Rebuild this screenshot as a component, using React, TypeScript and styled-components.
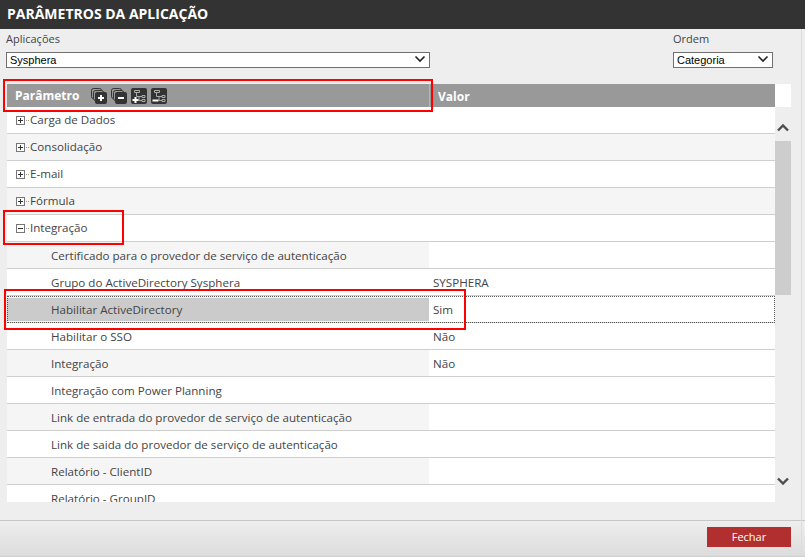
import React from "react";
import styled, { createGlobalStyle } from "styled-components";

const Global = createGlobalStyle`
  html, body { margin: 0; padding: 0; background: #eeeeee; }
  * { box-sizing: border-box; }
`;

const Page = styled.div`
  width: 805px; height: 557px; display: flex; flex-direction: column; position: relative; overflow: hidden;
  background: #eeeeee; font-family: "Open Sans", "Noto Sans", sans-serif; color: #444;
`;
const TitleBar = styled.div`
  height: 29px; background: #333333; color: #fff; font-weight: 700; font-size: 14px; line-height: 27px; padding-left: 7px; flex: none;
`;
const Content = styled.div`flex: 1; min-height: 0; display: flex; flex-direction: column; padding: 0 14px 0 6px;`;
const Filters = styled.div`display: flex; justify-content: space-between; height: 55px; flex: none; padding-right: 18px;`;
const Field = styled.div`display: flex; flex-direction: column; padding-top: 2px;`;
const Label = styled.div`font-size: 11px; line-height: 15px; color: #444; margin-bottom: 6px;`;
const FieldSelect = styled.div<{ $w: number }>`
  width: ${p => p.$w}px; height: 16px; background: #fff; border: 1px solid #707070; position: relative;
  font-family: "Liberation Sans", Arial, sans-serif; font-size: 11px; line-height: 14px; color: #000; padding-left: 3px;
  svg { position: absolute; right: 3px; top: 2px; }
`;
const Grid = styled.div`flex: 1; min-height: 0; display: flex; flex-direction: column; padding-left: 1px;`;
const HeaderRow = styled.div`display: flex; height: 23px; flex: none;`;
const HeaderCells = styled.div`flex: 1; display: flex; background: #999; color: #fff; font-weight: 700; font-size: 12px; line-height: 25px;`;
const HeaderParam = styled.div`width: 423px; display: flex; align-items: center; padding-left: 8px; gap: 12px; border-right: 1px solid #b5b5b5; span { line-height: 25px; }`;
const HeaderValue = styled.div`padding-left: 8px;`;
const ToolIcons = styled.div`display: flex; gap: 4px; align-items: center; svg { display: block; }`;
const HeaderGap = styled.div`width: 16px; background: #fff; flex: none;`;
const BodyWrap = styled.div`display: flex; height: 395px; flex: none;`;
const Rows = styled.div`flex: 1; overflow: hidden;`;
const Row = styled.div<{ $alt?: boolean; $focus?: boolean }>`
  height: 27px; display: flex; font-size: 11.6px; line-height: 26px; color: #444;
  background: ${p => (p.$alt ? "#f5f5f5" : "#fff")};
  border-bottom: 1px solid #cfcfcf; position: relative;
  ${p => p.$focus && "outline: 1px dotted #555; outline-offset: -1px;"}
`;
const NameCell = styled.div<{ $sel?: boolean; $group?: boolean }>`
  width: 422px; flex: none; padding-left: ${p => (p.$group ? "9px" : "44px")}; display: flex; align-items: center;
  background: ${p => (p.$sel ? "#cbcbcb" : "transparent")};
  ${p => (p.$sel ? "margin: 2px 0 1px;" : p.$group ? "" : "padding-top: 2px;")}
`;
const ValueCell = styled.div<{ $param?: boolean }>`
  flex: 1; padding: 1px 0 0 4px; background: ${p => (p.$param ? "#fff" : "transparent")};
`;
const Expander = styled.svg`display: block; flex: none;`;
const Scrollbar = styled.div`width: 16px; flex: none; display: flex; flex-direction: column; background: #eeeeee;`;
const ScrollUp = styled.div`height: 34px; display: flex; align-items: center; justify-content: center; flex: none; padding-top: 8px;`;
const ScrollDown = styled.div`height: 34px; display: flex; align-items: center; justify-content: center; flex: none; padding-bottom: 8px;`;
const Track = styled.div`flex: 1;`;
const Thumb = styled.div`height: 154px; background: #cdcdcd;`;
const Footer = styled.div`
  height: 37px; flex: none; margin: 17px -14px 0 -6px; border-top: 1px solid #c8c8c8; border-bottom: 1px solid #d0d0d0;
  background: linear-gradient(#eeeeee, #dcdcdc); display: flex; justify-content: flex-end; padding: 6px 14px 0 0;
`;
const CloseButton = styled.button`
  width: 84px; height: 20px; border: 0; padding: 0; background: #b22f2f; color: #fff; font-family: inherit; font-size: 11px; line-height: 20px;
`;
const Marker = styled.div<{ $l: number; $t: number; $w: number; $h: number }>`
  position: absolute; left: ${p => p.$l}px; top: ${p => p.$t}px; width: ${p => p.$w}px; height: ${p => p.$h}px;
  border: 2px solid #f00; pointer-events: none;
`;
const EdgeLine = styled.div`position: absolute; right: 3px; top: 29px; bottom: 2px; width: 1px; background: #dcdcdc;`;

const Chevron = () => (
  <svg width="12" height="8" viewBox="0 0 12 8"><path d="M1.5 1.5 6 6l4.5-4.5" fill="none" stroke="#222" strokeWidth="1.6" /></svg>
);
const ScrollArrow = ({ up }: { up?: boolean }) => (
  <svg width="12" height="8" viewBox="0 0 12 8"><path d={up ? "M1 6.5 6 1.5l5 5" : "M1 1.5 6 6.5l5-5"} fill="none" stroke="#4d4d4d" strokeWidth="2.4" /></svg>
);
const Plus = ({ open }: { open?: boolean }) => (
  <Expander width="14" height="11" viewBox="0 0 14 11">
    <rect x="0.5" y="1.5" width="8" height="8" fill="#fff" stroke="#777" />
    <path d={open ? "M2 5.5h5" : "M2 5.5h5M4.5 3v5"} stroke="#333" />
    <path d="M10 5.5h4" stroke="#999" strokeDasharray="1 1" />
  </Expander>
);
const StackIcon = ({ plus }: { plus?: boolean }) => (
  <svg width="16" height="16" viewBox="0 0 16 16">
    <rect x="0.5" y="0.5" width="10" height="10" rx="2" fill="#999" stroke="#333" />
    <rect x="2.5" y="2.5" width="10" height="10" rx="2" fill="#999" stroke="#333" />
    <rect x="4" y="4" width="12" height="12" rx="2" fill="#333" />
    <path d={plus ? "M7 10h6M10 7v6" : "M7 10h6"} stroke="#fff" strokeWidth="2" />
  </svg>
);
const TreeIcon = ({ plus }: { plus?: boolean }) => (
  <svg width="16" height="16" viewBox="0 0 16 16">
    <rect width="16" height="16" rx="2" fill="#333" />
    <path d="M3.5 2.5h5v2h-5zM11 7.5h3v2h-3zM11 11.5h3v2h-3zM5.5 4.5V8.5H11M8 8.5v4h3" fill="none" stroke="#aaa" strokeWidth="1" />
    <path d={plus ? "M1.5 12h6M4.5 9v6" : "M1.5 12.5h6"} stroke="#fff" strokeWidth="2" />
  </svg>
);

type RowData = { name: string; value?: string; group?: boolean; open?: boolean; sel?: boolean };
const data: RowData[] = [
  { name: "Carga de Dados", group: true },
  { name: "Consolidação", group: true },
  { name: "E-mail", group: true },
  { name: "Fórmula", group: true },
  { name: "Integração", group: true, open: true },
  { name: "Certificado para o provedor de serviço de autenticação" },
  { name: "Grupo do ActiveDirectory Sysphera", value: "SYSPHERA" },
  { name: "Habilitar ActiveDirectory", value: "Sim", sel: true },
  { name: "Habilitar o SSO", value: "Não" },
  { name: "Integração", value: "Não" },
  { name: "Integração com Power Planning" },
  { name: "Link de entrada do provedor de serviço de autenticação" },
  { name: "Link de saida do provedor de serviço de autenticação" },
  { name: "Relatório - ClientID" },
  { name: "Relatório - GroupID" },
];

export default function App() {
  return (
    <Page>
      <Global />
      <TitleBar>PARÂMETROS DA APLICAÇÃO</TitleBar>
      <Content>
        <Filters>
          <Field>
            <Label>Aplicações</Label>
            <FieldSelect $w={424}>Sysphera<Chevron /></FieldSelect>
          </Field>
          <Field>
            <Label>Ordem</Label>
            <FieldSelect $w={100}>Categoria<Chevron /></FieldSelect>
          </Field>
        </Filters>
        <Grid>
          <HeaderRow>
            <HeaderCells>
              <HeaderParam>
                <span>Parâmetro</span>
                <ToolIcons>
                  <StackIcon plus />
                  <StackIcon />
                  <TreeIcon plus />
                  <TreeIcon />
                </ToolIcons>
              </HeaderParam>
              <HeaderValue>Valor</HeaderValue>
            </HeaderCells>
            <HeaderGap />
          </HeaderRow>
          <BodyWrap>
            <Rows>
              {data.map((r, i) => (
                <Row key={i} $alt={i % 2 === 1} $focus={r.sel}>
                  <NameCell $group={r.group} $sel={r.sel}>
                    {r.group && <Plus open={r.open} />}
                    {r.name}
                  </NameCell>
                  <ValueCell $param={!r.group}>{r.value}</ValueCell>
                </Row>
              ))}
            </Rows>
            <Scrollbar>
              <ScrollUp><ScrollArrow up /></ScrollUp>
              <Thumb />
              <Track />
              <ScrollDown><ScrollArrow /></ScrollDown>
            </Scrollbar>
          </BodyWrap>
        </Grid>
        <Footer><CloseButton>Fechar</CloseButton></Footer>
      </Content>
      <EdgeLine />
      <Marker $l={3} $t={79} $w={430} $h={33} />
      <Marker $l={3} $t={210} $w={121} $h={35} />
      <Marker $l={4} $t={289} $w={462} $h={41} />
    </Page>
  );
}
